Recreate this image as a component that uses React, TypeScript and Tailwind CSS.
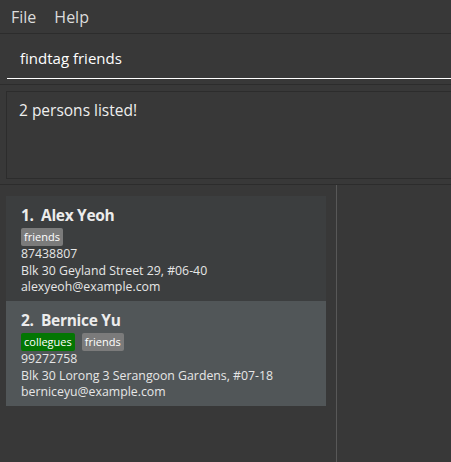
const persons = [
  {
    name: 'Alex Yeoh',
    tags: ['friends'],
    phone: '87438807',
    address: 'Blk 30 Geyland Street 29, #06-40',
    email: 'alexyeoh@example.com',
  },
  {
    name: 'Bernice Yu',
    tags: ['collegues', 'friends'],
    phone: '99272758',
    address: 'Blk 30 Lorong 3 Serangoon Gardens, #07-18',
    email: 'berniceyu@example.com',
  },
]

function PersonCard({ index, person }: { index: number; person: (typeof persons)[number] }) {
  const bg = index % 2 === 0 ? 'bg-[#3c3e3f]' : 'bg-[#515658]'
  return (
    <div className={`${bg} h-[105px] pl-[15px] pt-[8px] text-[#e6e6e6]`}>
      <div className="flex text-[15.5px] font-bold leading-[22px] tracking-[-0.3px] text-[#ececec]">
        <span className="w-[20px]">{index + 1}.</span>
        <span>{person.name}</span>
      </div>
      <div className="mt-[2px] flex gap-[7px]">
        {person.tags.map((tag) => (
          <span
            key={tag}
            className={`h-[18px] rounded-[2px] px-[3px] text-[11px] leading-[18px] text-white ${
              tag === 'collegues' ? 'bg-[#037603]' : 'bg-[#7b7b7b]'
            }`}
          >
            {tag}
          </span>
        ))}
      </div>
      <div className="text-[12.3px] leading-[16.5px]">
        <div>{person.phone}</div>
        <div>{person.address}</div>
        <div>{person.email}</div>
      </div>
    </div>
  )
}

export default function App() {
  return (
    <div
      className="flex h-[462px] w-[451px] flex-col overflow-hidden bg-[#383838]"
      style={{ fontFamily: '"Open Sans", sans-serif' }}
    >
      {/* menu bar */}
      <div className="flex h-[34px] shrink-0 items-center gap-[18px] border-b border-[#2c2c2c] pl-[11px] text-[16px] text-[#dcdcdc]">
        <span>File</span>
        <span>Help</span>
      </div>

      {/* command box */}
      <div className="h-[51px] shrink-0 border-b border-[#2c2c2c] pl-[7px] pt-[13px]">
        <div className="h-[32px] border-b border-white pl-[13px] text-[15px] leading-[22px] text-white">
          findtag friends
        </div>
      </div>

      {/* result display */}
      <div className="h-[100px] shrink-0 border-b border-[#2c2c2c] pl-[6px] pt-[6px]">
        <div className="h-[88px] border border-r-0 border-[#2c2c2c] pl-[12px] pt-[7px] text-[15.5px] text-[#eeeeee]">
          2 persons listed!
        </div>
      </div>

      {/* list */}
      <div className="flex flex-1">
        <div className="w-[337px] border-r border-[#585858] pl-[6px] pr-[10px] pt-[11px]">
          {persons.map((p, i) => (
            <PersonCard key={p.name} index={i} person={p} />
          ))}
        </div>
        <div className="flex-1" />
      </div>
    </div>
  )
}
